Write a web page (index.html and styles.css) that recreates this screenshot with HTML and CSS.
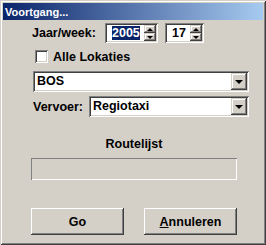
FILE: index.html
```html
<!DOCTYPE html>
<html lang="nl">
<head>
    <meta charset="UTF-8">
    <title>Voortgang...</title>
    <link rel="stylesheet" href="styles.css">
</head>
<body>
    <div class="window">
        <div class="titlebar">
            <span class="title">Voortgang...</span>
        </div>
        <div class="content">
            <div class="row row-year">
                <span class="label label-year">Jaar/week:</span>
                <div class="spin spin-year">
                    <div class="spin-field"><span class="selected">2005</span></div>
                    <div class="spin-buttons">
                        <div class="spin-btn"><span class="arrow-up"></span></div>
                        <div class="spin-btn"><span class="arrow-down"></span></div>
                    </div>
                </div>
                <div class="spin spin-week">
                    <div class="spin-field">17</div>
                    <div class="spin-buttons">
                        <div class="spin-btn"><span class="arrow-up"></span></div>
                        <div class="spin-btn"><span class="arrow-down"></span></div>
                    </div>
                </div>
            </div>

            <div class="row row-check">
                <span class="checkbox"></span>
                <span class="label">Alle Lokaties</span>
            </div>

            <div class="combo combo-loc">
                <div class="combo-field">BOS</div>
                <div class="combo-btn"><span class="arrow-down-big"></span></div>
            </div>

            <div class="row row-vervoer">
                <span class="label label-vervoer">Vervoer:</span>
                <div class="combo combo-vervoer">
                    <div class="combo-field">Regiotaxi</div>
                    <div class="combo-btn"><span class="arrow-down-big"></span></div>
                </div>
            </div>

            <div class="route">
                <div class="route-label">Routelijst</div>
                <div class="progress"></div>
            </div>

            <div class="buttons">
                <button class="win-button">Go</button>
                <button class="win-button"><u>A</u>nnuleren</button>
            </div>
        </div>
    </div>
</body>
</html>
```

FILE: styles.css
```css
body {
    margin: 0;
    padding: 0;
    background-color: #ffffff;
    font-family: 'Liberation Sans', Arial, sans-serif;
}

.window {
    width: 266px;
    height: 245px;
    box-sizing: border-box;
    padding: 3px;
    background-color: #d4d0c8;
    box-shadow: inset 1px 1px #d4d0c8, inset -1px -1px #404040,
                inset 2px 2px #ffffff, inset -2px -2px #808080;
}

.titlebar {
    height: 17px;
    background: linear-gradient(to right, #0a246a, #a6caf0);
    display: flex;
    align-items: center;
    padding-left: 2px;
}

.title {
    color: #ffffff;
    font-weight: bold;
    font-size: 11px;
}

.content {
    display: flex;
    flex-direction: column;
    font-size: 12.5px;
    font-weight: bold;
    color: #000000;
}

.row {
    display: flex;
    align-items: center;
}

.label {
    white-space: nowrap;
}

/* Jaar / week */
.row-year {
    margin-top: 3px;
    height: 20px;
    padding-left: 29px;
}

.label-year {
    width: 73px;
}

.spin {
    display: flex;
    height: 20px;
    box-sizing: border-box;
    padding: 2px;
    background-color: #ffffff;
    box-shadow: inset 1px 1px #808080, inset -1px -1px #ffffff,
                inset 2px 2px #404040, inset -2px -2px #d4d0c8;
}

.spin-year {
    width: 53px;
}

.spin-week {
    width: 39px;
    margin-left: 7px;
}

.spin-field {
    flex-grow: 1;
    line-height: 16px;
    padding-left: 5px;
}

.selected {
    background-color: #0a246a;
    color: #ffffff;
}

.spin-buttons {
    width: 12px;
    display: flex;
    flex-direction: column;
}

.spin-btn {
    flex-grow: 1;
    background-color: #d4d0c8;
    display: flex;
    align-items: center;
    justify-content: center;
    box-shadow: inset -1px -1px #404040, inset 1px 1px #d4d0c8,
                inset -2px -2px #808080, inset 2px 2px #ffffff;
}

.arrow-up {
    width: 0;
    height: 0;
    border-left: 3px solid transparent;
    border-right: 3px solid transparent;
    border-bottom: 3px solid #000000;
}

.arrow-down {
    width: 0;
    height: 0;
    border-left: 3px solid transparent;
    border-right: 3px solid transparent;
    border-top: 3px solid #000000;
}

/* Checkbox */
.row-check {
    margin-top: 7px;
    height: 13px;
    padding-left: 32px;
}

.checkbox {
    width: 13px;
    height: 13px;
    box-sizing: border-box;
    margin-right: 5px;
    background-color: #ffffff;
    box-shadow: inset 1px 1px #808080, inset -1px -1px #ffffff,
                inset 2px 2px #404040, inset -2px -2px #d4d0c8;
}

/* Combo boxes */
.combo {
    display: flex;
    height: 21px;
    box-sizing: border-box;
    padding: 2px;
    background-color: #ffffff;
    box-shadow: inset 1px 1px #808080, inset -1px -1px #ffffff,
                inset 2px 2px #404040, inset -2px -2px #d4d0c8;
}

.combo-loc {
    margin-top: 8px;
    margin-left: 30px;
    width: 216px;
}

.combo-field {
    flex-grow: 1;
    line-height: 17px;
    padding-left: 2px;
}

.combo-btn {
    width: 16px;
    background-color: #d4d0c8;
    display: flex;
    align-items: center;
    justify-content: center;
    box-shadow: inset -1px -1px #404040, inset 1px 1px #d4d0c8,
                inset -2px -2px #808080, inset 2px 2px #ffffff;
}

.arrow-down-big {
    width: 0;
    height: 0;
    border-left: 4px solid transparent;
    border-right: 4px solid transparent;
    border-top: 4px solid #000000;
}

.row-vervoer {
    margin-top: 4px;
    padding-left: 30px;
}

.label-vervoer {
    width: 56px;
}

.combo-vervoer {
    width: 160px;
}

/* Routelijst */
.route {
    margin-top: 20px;
    margin-left: 28px;
    width: 206px;
}

.route-label {
    text-align: center;
    line-height: 14px;
}

.progress {
    margin-top: 7px;
    height: 22px;
    box-shadow: inset 1px 1px #808080, inset -1px -1px #ffffff;
}

/* Buttons */
.buttons {
    display: flex;
    gap: 20px;
    margin-top: 28px;
    padding-left: 28px;
}

.win-button {
    width: 93px;
    height: 27px;
    border: none;
    padding: 0;
    background-color: #d4d0c8;
    font-family: 'Liberation Sans', Arial, sans-serif;
    font-size: 12.5px;
    font-weight: bold;
    color: #000000;
    box-shadow: inset -1px -1px #404040, inset 1px 1px #ffffff,
                inset -2px -2px #808080, inset 2px 2px #d4d0c8;
}
```
